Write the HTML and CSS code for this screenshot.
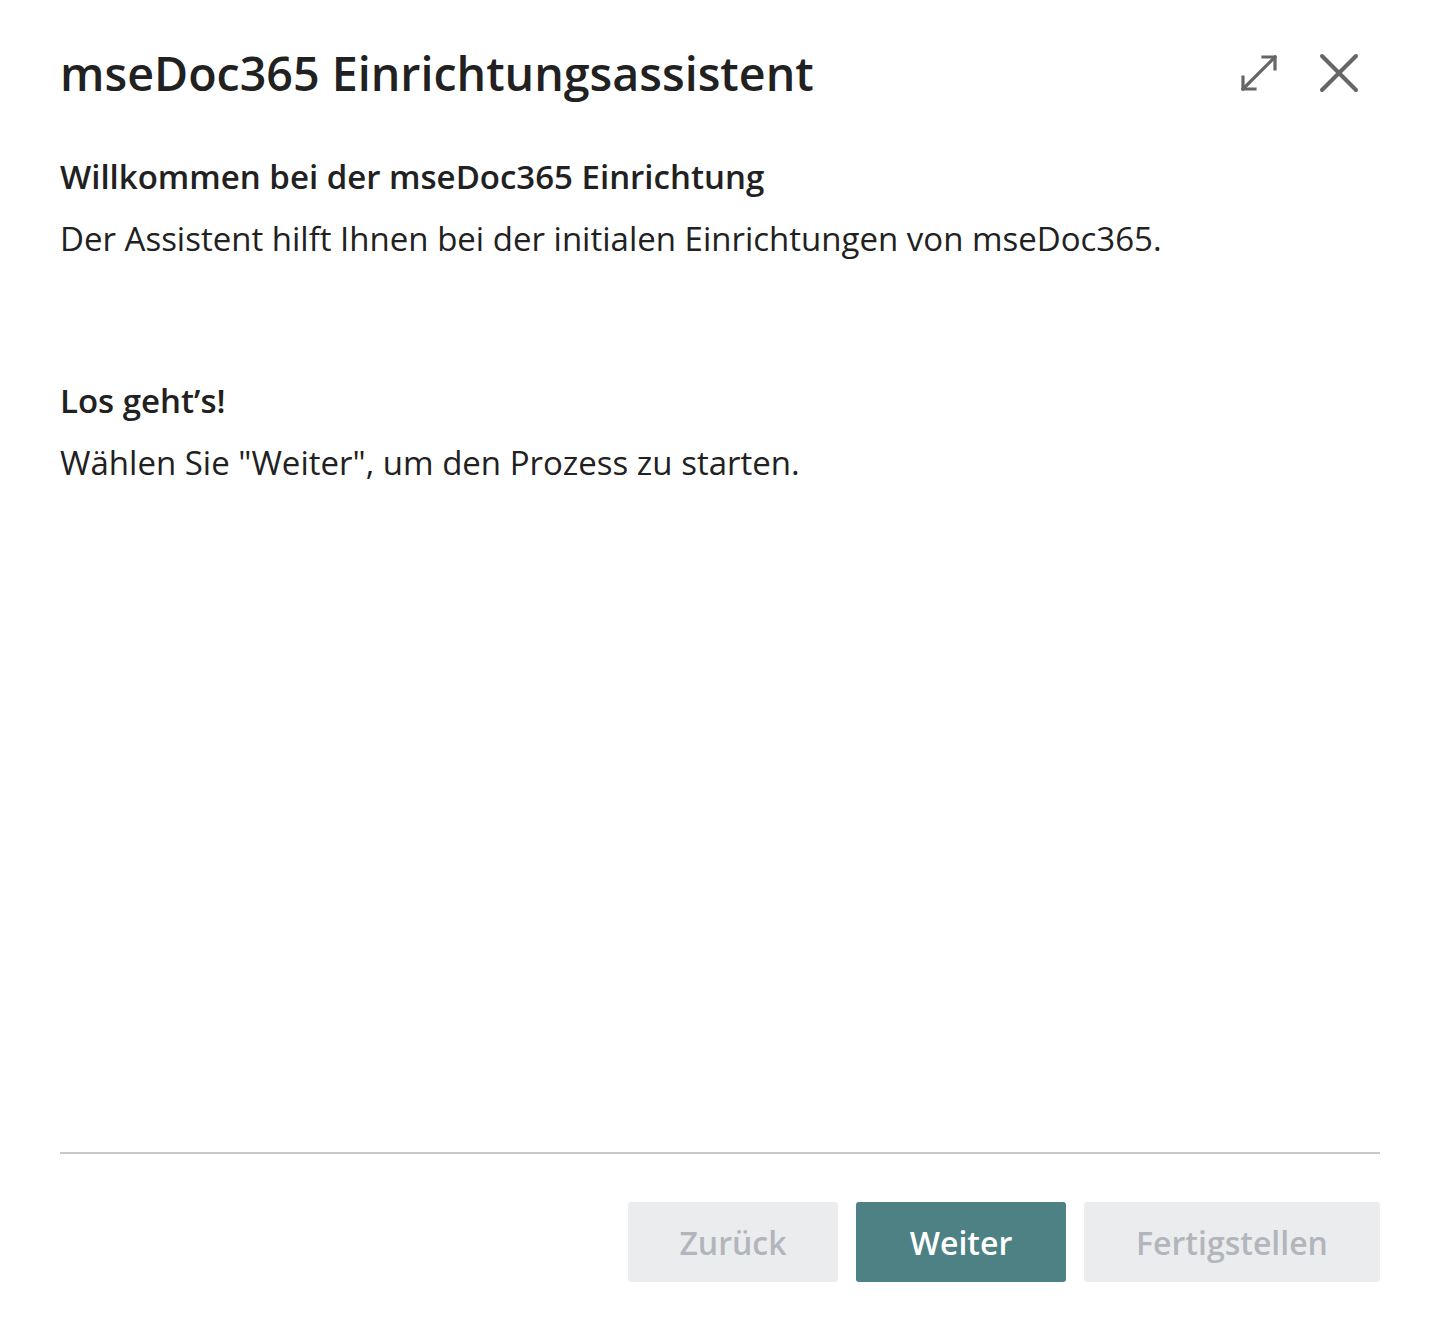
FILE: index.html
```html
<!DOCTYPE html>
<html lang="de">
<head>
<meta charset="utf-8">
<title>mseDoc365 Einrichtungsassistent</title>
<link rel="stylesheet" href="styles.css">
</head>
<body>
<div class="dialog">
  <header class="header">
    <h1 class="title">mseDoc365 Einrichtungsassistent</h1>
    <div class="header-actions">
      <button class="icon-btn" aria-label="Maximieren">
        <svg width="40" height="40" viewBox="0 0 40 40" fill="none" stroke="#666" stroke-width="3.2" stroke-linecap="square">
          <path d="M4 36 L36 4"/>
          <path d="M4 24 L4 36 L16 36"/>
          <path d="M24 4 L36 4 L36 16"/>
        </svg>
      </button>
      <button class="icon-btn" aria-label="Schließen">
        <svg width="40" height="40" viewBox="0 0 40 40" fill="none" stroke="#666" stroke-width="4" stroke-linecap="round">
          <path d="M3 3 L37 37"/>
          <path d="M37 3 L3 37"/>
        </svg>
      </button>
    </div>
  </header>
  <main class="content">
    <section class="section">
      <h2 class="section-title">Willkommen bei der mseDoc365 Einrichtung</h2>
      <p class="section-text">Der Assistent hilft Ihnen bei der initialen Einrichtungen von mseDoc365.</p>
    </section>
    <section class="section">
      <h2 class="section-title">Los geht’s!</h2>
      <p class="section-text">Wählen Sie "Weiter", um den Prozess zu starten.</p>
    </section>
  </main>
  <footer class="footer">
    <button class="btn btn-disabled btn-back">Zurück</button>
    <button class="btn btn-primary btn-next">Weiter</button>
    <button class="btn btn-disabled btn-finish">Fertigstellen</button>
  </footer>
</div>
</body>
</html>
```
FILE: styles.css
```css
html, body {
  margin: 0;
  padding: 0;
  background: #ffffff;
}
body {
  font-family: "Open Sans", "Noto Sans", "Liberation Sans", sans-serif;
  color: #212121;
}
.dialog {
  height: 1340px;
  box-sizing: border-box;
  padding: 0 55px 58px 60px;
  display: flex;
  flex-direction: column;
}
.header {
  display: flex;
  align-items: center;
  justify-content: space-between;
  height: 146px;
  padding-bottom: 4px;
}
.title {
  margin: 0;
  font-size: 46.6px;
  font-weight: 600;
  line-height: 1;
}
.header-actions {
  display: flex;
  gap: 40px;
  align-items: center;
  margin-top: 0;
  margin-right: 21px;
}
.icon-btn {
  border: 0;
  background: none;
  padding: 0;
  width: 40px;
  height: 40px;
  cursor: pointer;
}
.icon-btn svg { display: block; }
.content {
  flex: 1;
  display: flex;
  flex-direction: column;
  gap: 118px;
  padding-top: 5px;
  border-bottom: 2px solid #c8c8c8;
}
.section-title {
  margin: 0;
  font-size: 33px;
  font-weight: 600;
  line-height: 44px;
}
.section-text {
  margin: 18px 0 0;
  font-size: 33px;
  font-weight: 400;
  line-height: 44px;
}
.footer {
  display: flex;
  justify-content: flex-end;
  gap: 18px;
  padding-top: 48px;
}
.btn {
  height: 80px;
  border: 0;
  border-radius: 3px;
  font-family: inherit;
  font-size: 32px;
  font-weight: 600;
  padding: 0;
}
.btn-back { width: 210px; }
.btn-next { width: 210px; }
.btn-finish { width: 296px; }
.btn-disabled {
  background: #ebecee;
  color: #b3b5bd;
}
.btn-primary {
  background: #4e8184;
  color: #ffffff;
}
```
